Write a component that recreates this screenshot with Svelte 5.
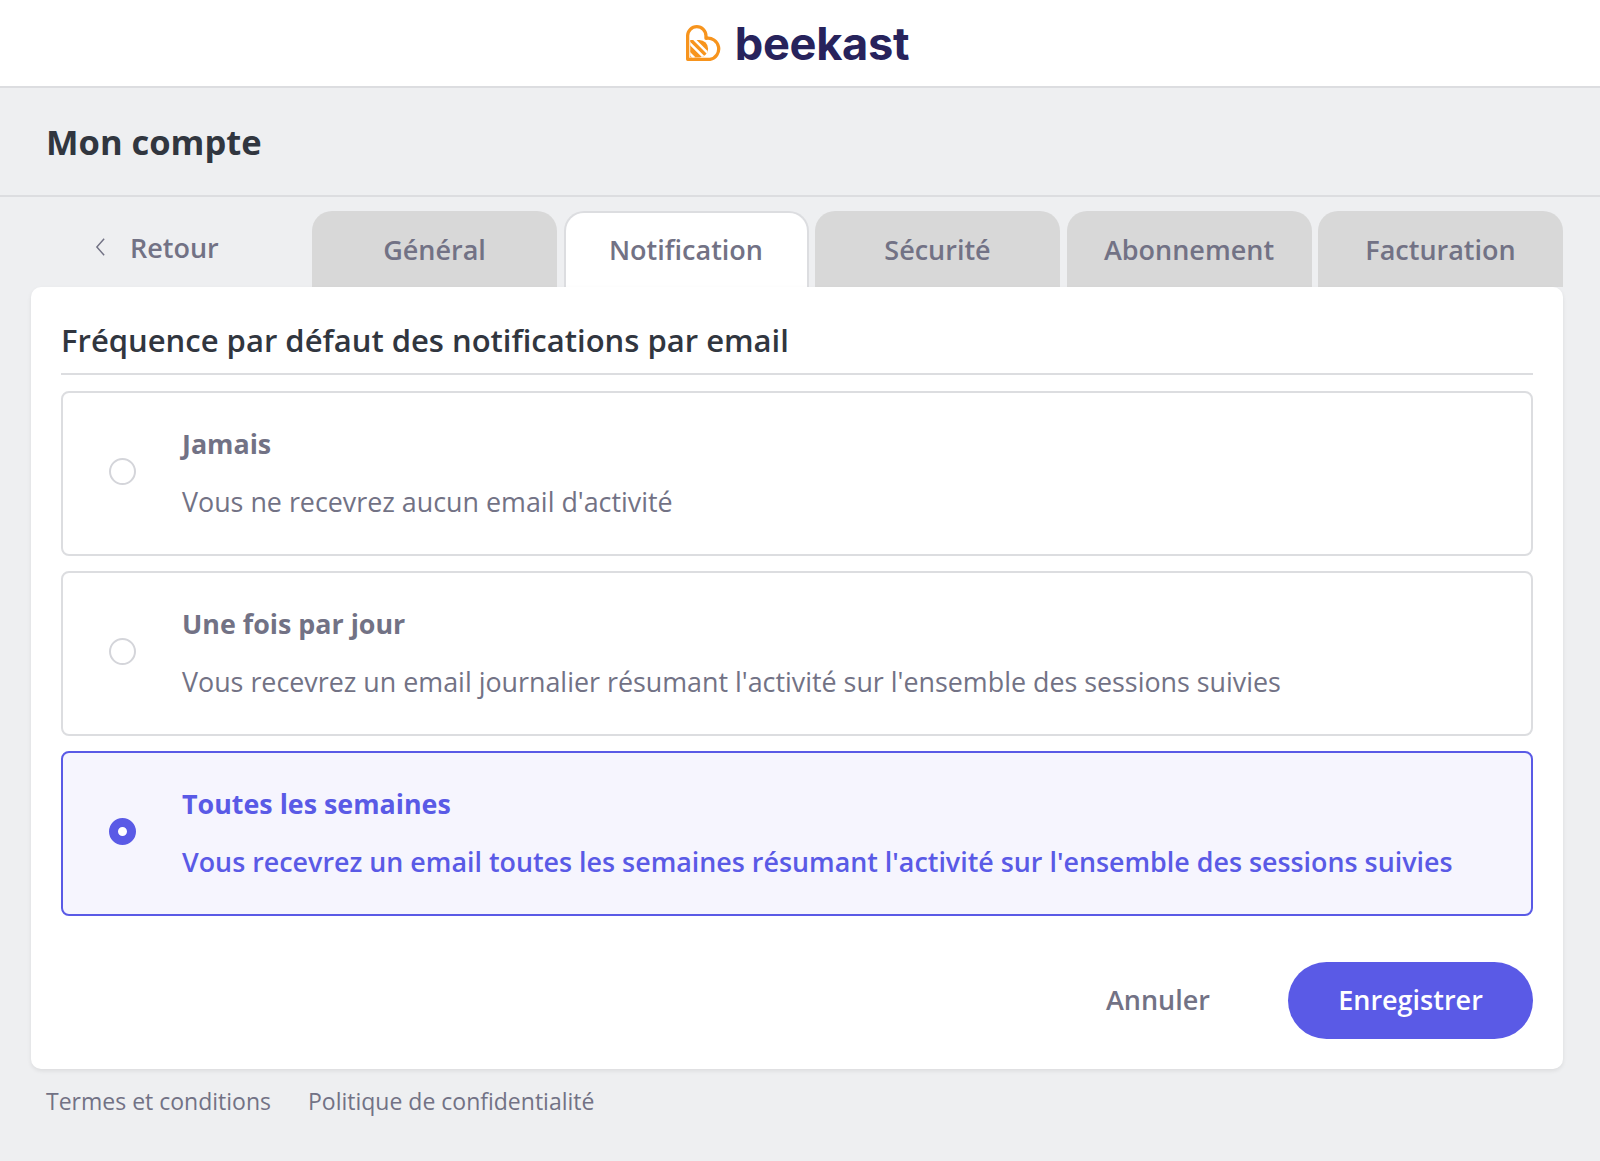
<script>
    const tabs = ["Général", "Notification", "Sécurité", "Abonnement", "Facturation"];
    const options = [
        { title: "Jamais", text: "Vous ne recevrez aucun email d'activité" },
        { title: "Une fois par jour", text: "Vous recevrez un email journalier résumant l'activité sur l'ensemble des sessions suivies" },
        { title: "Toutes les semaines", text: "Vous recevrez un email toutes les semaines résumant l'activité sur l'ensemble des sessions suivies" }
    ];
    let activeTab = $state("Notification");
    let frequency = $state(2);
</script>

<header class="topbar">
    <div class="logo">
        <svg class="logo-mark" viewBox="0 0 35 35" width="36" height="36" fill="none">
            <clipPath id="stripes-clip">
                <path d="M4 14.500H13A8.500 8.500 0 0 1 13 31.500H4Z"/>
            </clipPath>
            <path d="M1.600 33.400V10.500a8.900 8.900 0 0 1 17.800 0V13a10.200 10.200 0 0 1 4 20.400H1.600Z" stroke="#f7941d" stroke-width="3.200" stroke-linejoin="round"/>
            <g clip-path="url(#stripes-clip)">
                <rect x="3" y="14" width="20" height="18" fill="#f7941d"/>
                <path d="M2 16l16 16M8 14l14 14M0 24l8 8" stroke="#fff" stroke-width="2.400"/>
            </g>
        </svg>
        <span class="logo-word">beekast</span>
    </div>
</header>

<section class="title-bar">
    <h1>Mon compte</h1>
</section>

<main class="page">
    <nav class="tabs">
        <button class="back">
            <svg viewBox="0 0 14 22" width="13" height="20" fill="none">
                <path d="M11 2L3 11l8 9" stroke="#727285" stroke-width="1.600"/>
            </svg>
            <span>Retour</span>
        </button>
        {#each tabs as tab}
            <button class="tab" class:active={tab === activeTab} onclick={() => (activeTab = tab)}>{tab}</button>
        {/each}
    </nav>

    <div class="card">
        <h2>Fréquence par défaut des notifications par email</h2>
        <div class="options">
            {#each options as option, i}
                <button class="option" class:selected={frequency === i} onclick={() => (frequency = i)}>
                    <span class="radio"></span>
                    <span class="option-body">
                        <span class="option-title">{option.title}</span>
                        <span class="option-text">{option.text}</span>
                    </span>
                </button>
            {/each}
        </div>
        <div class="actions">
            <button class="cancel">Annuler</button>
            <button class="save">Enregistrer</button>
        </div>
    </div>

    <footer class="links">
        <span>Termes et conditions</span>
        <span>Politique de confidentialité</span>
    </footer>
</main>

<style>
    :global(body) {
        background: #eeeff1;
        font-family: "Open Sans", "Noto Sans", sans-serif;
        min-height: 1161px;
    }

    button {
        font-family: inherit;
        border: 0;
        background: none;
        padding: 0;
    }

    .topbar {
        height: 86px;
        background: #fff;
        border-bottom: 2px solid #dcdde0;
        display: flex;
        align-items: center;
        justify-content: center;
    }

    .logo {
        display: flex;
        align-items: center;
        gap: 13px;
        margin-left: -5px;
    }

    .logo-word {
        font-family: "Inter", sans-serif;
        font-weight: 700;
        font-size: 45.200px;
        line-height: 1;
        letter-spacing: -0.3px;
        color: #27235c;
        margin-top: 2px;
    }

    .title-bar {
        height: 107px;
        border-bottom: 2px solid #dcdde0;
        display: flex;
        align-items: center;
        padding-left: 46px;
    }

    h1 {
        margin: 0;
        font-size: 34.500px;
        font-weight: 700;
        color: #31363f;
    }

    .page {
        padding: 14px 37px 0 31px;
    }

    .tabs {
        display: flex;
        height: 76px;
        gap: 6.500px;
    }

    .back {
        width: 274.500px;
        flex: none;
        display: flex;
        align-items: center;
        gap: 23px;
        padding: 0 0 4px 63px;
        font-size: 27px;
        font-weight: 600;
        color: #727285;
    }

    .tab {
        width: 245px;
        flex: none;
        background: #d8d8d8;
        border-radius: 20px 20px 0 0;
        font-size: 27px;
        font-weight: 600;
        color: #727285;
    }

    .tab.active {
        background: #fff;
        border: 2px solid #dcdde0;
        border-bottom: 0;
        padding-bottom: 2px;
    }

    .card {
        background: #fff;
        border-radius: 10px;
        padding: 31px 30px 30px;
        box-shadow: 0 2px 4px rgba(0, 0, 0, 0.08);
        position: relative;
    }

    h2 {
        margin: 0;
        padding-bottom: 11px;
        border-bottom: 2px solid #dcdde0;
        font-size: 31px;
        line-height: 44px;
        font-weight: 600;
        color: #31363f;
    }

    .options {
        display: flex;
        flex-direction: column;
        gap: 15px;
        margin-top: 16px;
    }

    .option {
        height: 165px;
        display: flex;
        align-items: center;
        text-align: left;
        border: 2px solid #dcdde0;
        border-radius: 8px;
        color: #727285;
    }

    .option.selected {
        background: #f6f5fe;
        border-color: #5a5ae6;
        color: #5a5ae6;
    }

    .radio {
        width: 27px;
        height: 27px;
        margin-left: 46px;
        margin-bottom: 5px;
        border-radius: 50%;
        border: 2px solid #d4d5da;
        box-sizing: border-box;
        background: #fff;
    }

    .selected .radio {
        border: 9px solid #5a5ae6;
    }

    .option-body {
        display: flex;
        flex-direction: column;
        gap: 16px;
        margin-left: 46px;
        margin-bottom: 1px;
    }

    .option-title {
        font-size: 26.850px;
        line-height: 42px;
        font-weight: 700;
    }

    .option-text {
        font-size: 26.850px;
        line-height: 42px;
    }

    .selected .option-text {
        font-weight: 600;
    }

    .actions {
        display: flex;
        justify-content: flex-end;
        align-items: center;
        margin-top: 46px;
        gap: 78px;
    }

    .cancel {
        font-size: 27px;
        font-weight: 600;
        color: #727285;
        padding-bottom: 2px;
    }

    .save {
        width: 245px;
        height: 77px;
        padding-bottom: 2px;
        border-radius: 39px;
        background: #5a5ae6;
        color: #fff;
        font-size: 27px;
        font-weight: 600;
    }

    .links {
        display: flex;
        gap: 37px;
        margin: 15px 0 0 15px;
        font-size: 23px;
        line-height: 34px;
        color: #727285;
    }
</style>
